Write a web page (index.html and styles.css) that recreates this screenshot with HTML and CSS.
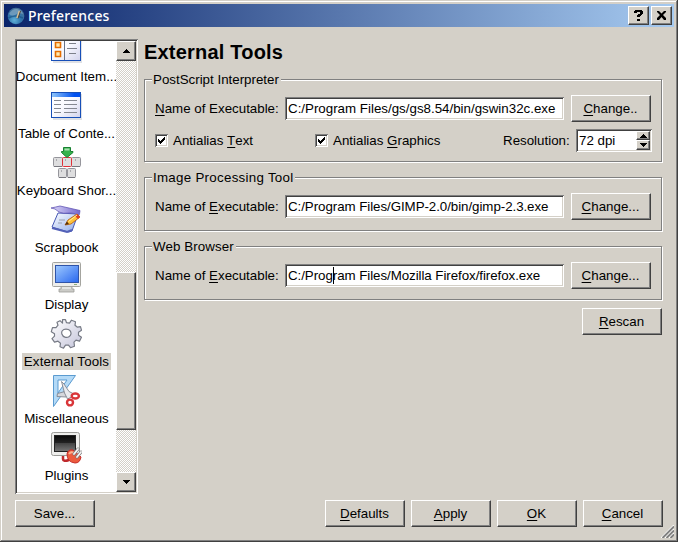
FILE: index.html
```html
<!DOCTYPE html>
<html lang="en">
<head>
<meta charset="utf-8">
<title>Preferences</title>
<link rel="stylesheet" href="styles.css">
</head>
<body>
<div class="window">
  <header class="titlebar">
    <svg class="app-icon" width="18" height="18" viewBox="0 0 18 18">
      <defs><radialGradient id="globe" cx=".4" cy=".75" r=".8"><stop offset="0" stop-color="#5fb0d8"/><stop offset=".5" stop-color="#2f74ac"/><stop offset="1" stop-color="#4c7193"/></radialGradient></defs>
      <circle cx="9" cy="9" r="8.3" fill="url(#globe)"/>
      <path d="M2 7Q5 1.500 10 2Q15 3 16 7Q11 5 8 8Q5 10 2 7Z" fill="#86a9c3" opacity=".7"/>
      <path d="M1.500 11Q8 7 16 11" stroke="#164b7d" stroke-width="1.500" fill="none" opacity=".6"/>
      <path d="M12.500 4L10 11" stroke="#d8c39a" stroke-width="1.800"/><path d="M13.500 4L11 11.500" stroke="#4f4438"/>
    </svg>
    <h1 class="title">Preferences</h1>
    <button class="caption"><svg width="17" height="15" viewBox="0 0 17 15"><path d="M4 4V3H5V2H12V3H13V6H12V7H11V8H10V9H7V7H8V6H10V4H7V5H4ZM7 11H10V13H7Z"/></svg></button>
    <button class="caption"><svg width="17" height="15" viewBox="0 0 17 15"><path d="M4 3H6L8.500 5.500L11 3H13V4L10 7L13 10V12H11L8.500 9L6 12H4V10L7 7L4 4Z"/></svg></button>
  </header>

  <div class="body">
    <nav class="sidebar">
      <div class="items">
        <div class="item">
          <svg width="32" height="32" viewBox="0 0 32 32">
            <rect x="3" y="3" width="29" height="27" fill="#c9cdd6" opacity=".6"/>
            <rect x="1.500" y="1.500" width="29" height="26" fill="url(#page)" stroke="#174fb8"/>
            <path d="M1 27.500H31" stroke="#174fb8"/>
            <path d="M14.500 2V27" stroke="#667086"/>
            <path d="M5.500 9.500h5v5h-5zM5.500 18.500h5v5h-5z" fill="#ffe9b0" stroke="#e56d00" stroke-width="1.600"/>
            <path d="M19 10.500h7M17 15.500h10M19 20.500h7" stroke="#7d808a"/>
          </svg>
          <span class="label">Document Item...</span>
        </div>
        <div class="item">
          <svg width="32" height="32" viewBox="0 0 32 32">
            <defs>
              <linearGradient id="page" x2="1" y2="1"><stop offset="0" stop-color="#fff"/><stop offset=".5" stop-color="#fafaff"/><stop offset="1" stop-color="#d2d3ec"/></linearGradient>
              <linearGradient id="bar"><stop offset="0" stop-color="#8fc5fa"/><stop offset=".8" stop-color="#0050f0"/></linearGradient>
            </defs>
            <rect x="3" y="4" width="29" height="26" fill="#c9cdd6" opacity=".6"/>
            <rect x="1.500" y="2.500" width="29" height="25" fill="url(#page)" stroke="#174fb8"/>
            <rect x="2" y="3" width="28" height="4" fill="url(#bar)"/>
            <path d="M4 10.500h7M14 10.500h13M4 14.500h7M14 14.500h13M4 18.500h7M14 18.500h13M4 22.500h7M14 22.500h13" stroke="#858891"/>
          </svg>
          <span class="label">Table of Conte...</span>
        </div>
        <div class="item">
          <svg width="32" height="32" viewBox="0 0 32 32">
            <g fill="#dededf" stroke="#96969c"><rect x="3.500" y="10.500" width="9" height="9" rx="1"/><rect x="21.500" y="10.500" width="9" height="9" rx="1"/><rect x="8.500" y="21.500" width="8" height="9" rx="1"/><rect x="17.500" y="21.500" width="8" height="9" rx="1"/><rect x="12.500" y="10.500" width="9" height="9" rx="1" stroke="#e03038"/></g>
            <path d="M4 19.500h8M22 19.500h8M9 30.500h7M18 30.500h7" stroke="#77777e"/>
            <path d="M6 13h1M15 13h1M25 13h1M11 24h1M20 24h1" stroke="#77777e"/>
            <path d="M13.500 .500h7v4h2.500v1L17 10.500L11.500 5.500v-1h2z" fill="#35b34c" stroke="#188131"/><path d="M14.500 1.500h5v2h-5z" fill="#a9dfb0"/>
          </svg>
          <span class="label">Keyboard Shor...</span>
        </div>
        <div class="item">
          <svg width="32" height="32" viewBox="0 0 32 32">
            <defs><linearGradient id="cover"><stop offset="0" stop-color="#ddd9fa"/><stop offset="1" stop-color="#7467cc"/></linearGradient>
            <linearGradient id="pad" x2="1" y2="1"><stop offset="0" stop-color="#fff"/><stop offset="1" stop-color="#8eabea"/></linearGradient></defs>
            <path d="M8 9L28 10L22 27Q19 29 15 27L2 23Z" fill="url(#pad)" stroke="#4658b4"/>
            <path d="M2 24L17 28L22 26" stroke="#5361b8" stroke-width="2" fill="none"/>
            <path d="M1 4Q6 3 10 2L30 6.500Q30 10 28 13Q27 9 20 9Q13 10 9 8Q5 4 1 4Z" fill="url(#cover)" stroke="#6357b5" stroke-width=".8"/>
            <path d="M9 16h6M8 19h4" stroke="#99a0b0"/>
            <path d="M15 21L18 16L27 10L30 13L21 20Z" fill="#ffc23a" stroke="#b15708" stroke-width=".8"/>
            <path d="M27 10L30 13L28 15L25 12Z" fill="#e23f22"/><path d="M15 21L17 17.500L19 20Z" fill="#53300c"/><path d="M18.500 17.500L27 11" stroke="#fff19b"/>
          </svg>
          <span class="label">Scrapbook</span>
        </div>
        <div class="item">
          <svg width="32" height="32" viewBox="0 0 32 32">
            <defs><linearGradient id="screen" x2="1" y2="1"><stop offset="0" stop-color="#9fcaff"/><stop offset="1" stop-color="#2866ee"/></linearGradient></defs>
            <path d="M11 24h11v4h2v3H9v-3h2z" fill="#cbcbc7" stroke="#9c9c98" stroke-width=".8"/>
            <rect x="2.500" y="1.500" width="28" height="24" rx="1" fill="#ededeb" stroke="#a4a49f"/>
            <rect x="5.500" y="4.500" width="23" height="17" fill="url(#screen)" stroke="#3054a8"/>
            <path d="M12 27h9" stroke="#fff"/><path d="M24 23.500h3" stroke="#8cad79"/>
          </svg>
          <span class="label">Display</span>
        </div>
        <div class="item selected">
          <svg width="32" height="32" viewBox="0 0 32 32">
            <defs><linearGradient id="steel" x2="1" y2="1"><stop offset="0" stop-color="#fff"/><stop offset="1" stop-color="#c4c4da"/></linearGradient></defs>
            <path transform="translate(.5 .2)" fill="url(#steel)" stroke="#777b86" stroke-width="1.200" stroke-linejoin="round" fill-rule="evenodd" d="M12 1.500L15 1.500L16 4.500L19 5L21 2L25 3.500L24.500 7L27 9L30 8.500L31 12L28 14L28 17L31 19L29 23L25.500 22L23.500 24L24 28L20 29.500L18 27L15 27L13 30L9.500 28.500L10 25L7.500 23L4 24L1.500 20.500L4 18L4 15.500L.8 13.500L2 9.500L5.500 9.500L7.500 7L6.500 4L9.500 2.500L12 5ZM15.500 11C12 11 10.500 13.500 11.500 16C12.500 19 16 20 18.500 18.500C21 17 21 14.500 19.500 12.500C18.500 11.300 17 11 15.500 11Z"/>
          </svg>
          <span class="label">External Tools</span>
        </div>
        <div class="item">
          <svg width="32" height="32" viewBox="0 0 32 32">
            <path d="M3.500 .500H25.500L3.500 31.500ZM8 5V18L17 5Z" fill="#b4daf7" stroke="#5b9bd0" fill-rule="evenodd"/>
            <path d="M19 17L16 22L7 21.500L7.500 18.500L15 16.500Z" fill="#d5d7dc" stroke="#80858e" stroke-width=".9"/>
            <path d="M11.500 6.500L14 9L19 16.500L24 19L21.500 22L17.500 24L14.500 18Z" fill="#e9eaee" stroke="#80858e" stroke-width=".9"/>
            <ellipse cx="25.300" cy="21" rx="3.600" ry="2.500" fill="#fff" stroke="#d93639" stroke-width="2.400"/>
            <ellipse cx="20" cy="27.500" rx="3" ry="2.900" fill="#fff" stroke="#d93639" stroke-width="2.400"/>
          </svg>
          <span class="label">Miscellaneous</span>
        </div>
        <div class="item">
          <svg width="32" height="33" viewBox="0 0 32 33">
            <defs><linearGradient id="dark" x2="0" y2="1"><stop offset="0" stop-color="#080808"/><stop offset=".45" stop-color="#222"/><stop offset=".5" stop-color="#444"/><stop offset="1" stop-color="#777"/></linearGradient></defs>
            <rect x="1.500" y=".500" width="28" height="23" rx="2" fill="#eeeeec" stroke="#9b9b98"/>
            <rect x="4.500" y="3.500" width="21" height="16" fill="url(#dark)" stroke="#222"/>
            <path d="M13 24V27Q13 30 19 28" stroke="#bf292c" stroke-width="2.500" fill="none"/>
            <path d="M17 22Q18 17 23 18L31 25Q30 31 25 31Q17 30 17 22Z" fill="#ec5b3d" stroke="#c52c28"/>
            <path d="M19 22Q21 19 24 21" stroke="#ffb08e" stroke-width="2" fill="none"/>
            <path d="M24 22L28 17M27 25L31 20" stroke="#777" stroke-width="3" stroke-linecap="round"/><path d="M24 22L28 17M27 25L31 20" stroke="#f5f5f5" stroke-width="1.800" stroke-linecap="round"/>
          </svg>
          <span class="label plugins">Plugins</span>
        </div>
      </div>
      <div class="scrollbar">
        <button class="scroll-btn"><svg width="7" height="4" viewBox="0 0 7 4"><path d="M3 0h1v1h1v1h1v1h1v1H0V3h1V2h1V1h1z"/></svg></button>
        <div class="thumb"></div>
        <button class="scroll-btn"><svg width="7" height="4" viewBox="0 0 7 4"><path d="M3 4h1V3h1V2h1V1h1V0H0v1h1v1h1v1h1z"/></svg></button>
      </div>
    </nav>

    <main class="panel">
      <h2 class="heading">External Tools</h2>

      <section class="group">
        <h3 class="legend">PostScript Interpreter</h3>
        <div class="row">
          <label class="name"><u>N</u>ame of Executable:</label>
          <div class="field">C:/Program Files/gs/gs8.54/bin/gswin32c.exe</div>
          <button class="btn"><span><u>C</u>hange..</span></button>
        </div>
        <div class="options">
          <label class="check"><span class="box"><svg width="9" height="9" viewBox="0 0 9 9"><path d="M1 3h1v1h1v1h1V4h1V3h1V2h1V1h1v3H7v1H6v1H5v1H4v1H3V7H2V6H1z"/></svg></span>Antialias <u>T</u>ext</label>
          <label class="check"><span class="box"><svg width="9" height="9" viewBox="0 0 9 9"><path d="M1 3h1v1h1v1h1V4h1V3h1V2h1V1h1v3H7v1H6v1H5v1H4v1H3V7H2V6H1z"/></svg></span>Antialias <u>G</u>raphics</label>
          <label class="res">Resolution:</label>
          <div class="field spin">
            <span>72 dpi</span>
            <div class="steps">
              <button class="step"><svg width="7" height="4" viewBox="0 0 7 4"><path d="M3 0h1v1h1v1h1v1h1v1H0V3h1V2h1V1h1z"/></svg></button>
              <button class="step"><svg width="7" height="4" viewBox="0 0 7 4"><path d="M3 4h1V3h1V2h1V1h1V0H0v1h1v1h1v1h1z"/></svg></button>
            </div>
          </div>
        </div>
      </section>

      <section class="group">
        <h3 class="legend image-tool">Image Processing Tool</h3>
        <div class="row">
          <label class="name">Name of <u>E</u>xecutable:</label>
          <div class="field narrow">C:/Program Files/GIMP-2.0/bin/gimp-2.3.exe</div>
          <button class="btn"><span><u>C</u>hange...</span></button>
        </div>
      </section>

      <section class="group">
        <h3 class="legend web">Web Browser</h3>
        <div class="row">
          <label class="name">Name of <u>E</u>xecutable:</label>
          <div class="field narrow">C:/Prog<i class="caret"></i>ram Files/Mozilla Firefox/firefox.exe</div>
          <button class="btn"><span><u>C</u>hange...</span></button>
        </div>
      </section>

      <button class="btn rescan"><span><u>R</u>escan</span></button>
    </main>
  </div>

  <footer class="footer">
    <button class="btn save"><span>Save...</span></button>
    <button class="btn"><span><u>D</u>efaults</span></button>
    <button class="btn"><span><u>A</u>pply</span></button>
    <button class="btn"><span><u>O</u>K</span></button>
    <button class="btn"><span><u>C</u>ancel</span></button>
  </footer>
  <svg class="grip" width="13" height="13" viewBox="0 0 13 13"><path d="M0 13L13 0M4 13L13 4M8 13L13 8" stroke="#fff" stroke-width="1.200"/><path d="M1.500 13L13 1.500M5.500 13L13 5.500M9.500 13L13 9.500" stroke="#808080" stroke-width="1.800"/></svg>
</div>
</body>
</html>
```

FILE: styles.css
```css
* { box-sizing: border-box; }

body {
  margin: 0;
  font: 13.333px/17px "Liberation Sans", Arial, sans-serif;
  color: #000;
  overflow: hidden;
}

h1, h2, h3 { margin: 0; font-size: inherit; font-weight: normal; }

button { padding: 0; font: inherit; color: inherit; border-radius: 0; }

svg { display: block; flex: none; }

u { text-decoration: underline; text-underline-offset: 2px; text-decoration-thickness: 1px; text-decoration-skip-ink: none; }

.window {
  position: relative;
  display: flex;
  flex-direction: column;
  width: 678px;
  height: 542px;
  padding: 4px;
  background: #d4d0c8;
  box-shadow: inset -1px -1px #404040, inset 1px 1px #d4d0c8, inset -2px -2px #808080, inset 2px 2px #fff;
}

.titlebar {
  display: flex;
  align-items: center;
  gap: 2px;
  height: 23px;
  padding: 0 2px 0 3px;
  background: linear-gradient(90deg, #0a246a, #a6caf0);
}

.title {
  flex: 1;
  padding-left: 1px;
  color: #fff;
  font: 500 14px/20px "Noto Sans", sans-serif;
  letter-spacing: .2px;
}

.caption, .btn, .scroll-btn, .thumb, .step {
  display: flex;
  align-items: center;
  justify-content: center;
  background: #d4d0c8;
  border: 1px solid;
  border-color: #fff #404040 #404040 #fff;
  box-shadow: inset -1px -1px #808080;
}

.caption { width: 21px; height: 19px; }

.body { display: flex; gap: 6px; padding: 12px 11px 0; height: 467px; }

.sidebar {
  display: flex;
  width: 123px;
  height: 455px;
  padding: 2px;
  background: #fff;
  box-shadow: inset 1px 1px #808080, inset -1px -1px #fff, inset 2px 2px #404040, inset -2px -2px #d4d0c8;
}

.items { width: 99px; overflow: hidden; }

.item {
  display: flex;
  flex-direction: column;
  align-items: center;
  gap: 3px;
  height: 57px;
}

.item svg { margin-left: -1px; }

.item:first-child { margin-top: -8px; }

.label { padding: 0 2px; white-space: nowrap; }

.label.plugins { margin-top: -1px; }

.selected .label { background: #d4d0c8; letter-spacing: .13px; }

.scrollbar {
  display: flex;
  flex-direction: column;
  justify-content: space-between;
  width: 20px;
  background: repeating-conic-gradient(#fff 0 25%, #d4d0c8 0 50%) 0 0 / 2px 2px;
}

.scroll-btn { height: 20px; }

.thumb { height: 158px; margin-top: 169px; }

.panel { display: flex; flex-direction: column; width: 519px; }

.heading {
  height: 40px;
  font-size: 20px;
  line-height: 26px;
  font-weight: bold;
  letter-spacing: .2px;
}

.group {
  width: 518px;
  height: 54px;
  margin-bottom: 15px;
  padding-left: 10px;
  border: 1px solid #808080;
  box-shadow: inset 1px 1px #fff, 1px 1px #fff;
}

.group:first-of-type { height: 83px; }

.legend {
  width: max-content;
  height: 17px;
  margin: -9px 0 0 -3px;
  padding: 0 2px 0 1px;
  background: #d4d0c8;
}

.image-tool { letter-spacing: .28px; }

.web { letter-spacing: .1px; }

.row { display: flex; align-items: center; height: 27px; margin-top: 7px; }

.name { width: 130px; white-space: nowrap; }

.field {
  width: 279px;
  height: 23px;
  padding: 3px 3px 0;
  background: #fff;
  box-shadow: inset 1px 1px #808080, inset -1px -1px #fff, inset 2px 2px #404040, inset -2px -2px #d4d0c8;
  white-space: nowrap;
}

.narrow { letter-spacing: -.06px; }

.field + .btn { margin-left: 7px; }

.caret { display: inline-block; width: 1px; height: 17px; margin-right: -1px; vertical-align: top; background: #000; }

.btn { width: 80px; height: 27px; padding-right: 1px; }

.options { display: flex; align-items: center; height: 23px; margin-top: 7px; }

.check { display: flex; width: 160px; height: 17px; white-space: pre; }

.box {
  width: 13px;
  height: 13px;
  margin: 2px 5px 0 0;
  padding: 2px;
  background: #fff;
  box-shadow: inset 1px 1px #808080, inset -1px -1px #fff, inset 2px 2px #404040, inset -2px -2px #d4d0c8;
}

.res { width: 73px; margin-left: 28px; }

.spin { display: flex; justify-content: space-between; width: 76px; padding: 2px; }

.spin span { padding: 1px 0 0 1px; }

.steps { display: flex; flex-direction: column; width: 14px; }

.step { height: 9px; }

.step + .step { height: 10px; }

.rescan { margin: -7px 0 0 438px; }

.footer { display: flex; gap: 6px; padding: 6px 0 0 11px; }

.save { margin-right: 224px; }

.grip { position: absolute; right: 4px; bottom: 4px; }
```
